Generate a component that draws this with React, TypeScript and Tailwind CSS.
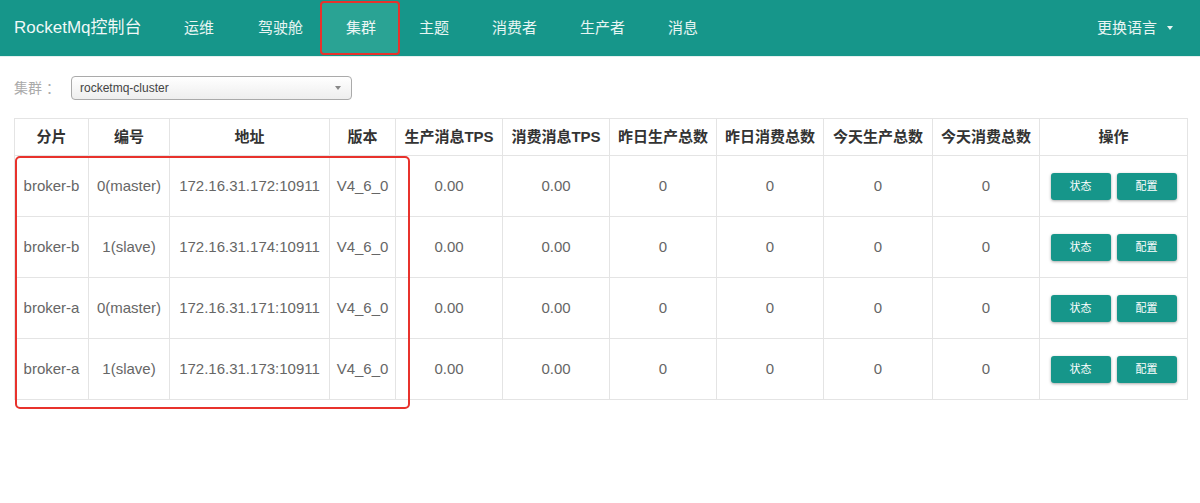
import React from "react";

const font = { fontFamily: '"Liberation Sans", "Noto Sans CJK SC", sans-serif' };

const navItems = [
  { label: "运维", w: "w-[74px] pl-[22px]", active: false },
  { label: "驾驶舱", w: "w-[86px] pl-[22px]", active: false },
  { label: "集群", w: "w-[76px] pl-[24px]", active: true },
  { label: "主题", w: "w-[73px] pl-[21px]", active: false },
  { label: "消费者", w: "w-[88px] pl-[21px]", active: false },
  { label: "生产者", w: "w-[88px] pl-[21px]", active: false },
  { label: "消息", w: "w-[73px] pl-[21px]", active: false },
];

const headers = ["分片", "编号", "地址", "版本", "生产消息TPS", "消费消息TPS", "昨日生产总数", "昨日消费总数", "今天生产总数", "今天消费总数", "操作"];
const widths = [74, 81, 160, 66, 107, 107, 107, 107, 109, 107, 148];

const rows = [
  ["broker-b", "0(master)", "172.16.31.172:10911", "V4_6_0"],
  ["broker-b", "1(slave)", "172.16.31.174:10911", "V4_6_0"],
  ["broker-a", "0(master)", "172.16.31.171:10911", "V4_6_0"],
  ["broker-a", "1(slave)", "172.16.31.173:10911", "V4_6_0"],
];

function Btn({ children }: { children: React.ReactNode }) {
  return (
    <button className="w-[60px] h-[27px] rounded-[3px] bg-[#16968a] text-white text-[11px] shadow-[0_1px_3px_rgba(0,0,0,0.35)]">
      {children}
    </button>
  );
}

const td = "border border-[#e4e4e4] text-[15px] text-[#666] text-center whitespace-nowrap p-0";

export default function App() {
  return (
    <div className="w-[1200px] h-[503px] bg-white overflow-hidden" style={font}>
      <div className="h-[57px] bg-[#16968a] flex items-center border-b border-[#e3f1ef]">
        <div className="pl-[14px] w-[162px] text-[17px] text-white/95">RocketMq控制台</div>
        <div className="flex h-full">
          {navItems.map((it) =>
            it.active ? (
              <div key={it.label} className="relative h-full flex items-center">
                <div className={`h-[50px] ${it.w} bg-[#2aa394] flex items-center text-[15px] text-white/90 whitespace-nowrap`}>
                  {it.label}
                </div>
                <div className="absolute left-[-2px] top-[1px] w-[80px] h-[54px] border-2 border-[#e8322c] rounded-[4px]" />
              </div>
            ) : (
              <div key={it.label} className={`h-full flex items-center ${it.w} text-[15px] text-white/90 whitespace-nowrap`}>
                {it.label}
              </div>
            )
          )}
        </div>
        <div className="ml-auto pr-[27px] flex items-center gap-[10px] text-[15px] text-white/90">
          <span>更换语言</span>
          <span className="w-0 h-0 border-l-[3px] border-r-[3px] border-t-[4px] border-l-transparent border-r-transparent border-t-white/90" />
        </div>
      </div>

      <div className="flex items-center h-[24px] mt-[19px] px-[14px]">
        <span className="text-[14px] text-[#aaaaaa] w-[57px]">
          集群<span className="ml-[4px]">：</span>
        </span>
        <div className="w-[281px] h-[24px] rounded-[4px] border border-[#aaaaaa] bg-gradient-to-b from-white to-[#eeeeee] flex items-center px-[8px] text-[12px] text-[#444]">
          <span>rocketmq-cluster</span>
          <span className="ml-auto mr-[2px] w-0 h-0 border-l-[3px] border-r-[3px] border-t-[4px] border-l-transparent border-r-transparent border-t-[#888]" />
        </div>
      </div>

      <div className="relative mt-[18px] ml-[14px] w-[1173px]">
        <table className="table-fixed border-collapse w-[1173px]">
          <colgroup>
            {widths.map((w, i) => (
              <col key={i} style={{ width: w }} />
            ))}
          </colgroup>
          <thead>
            <tr className="h-[37px]">
              {headers.map((h) => (
                <th key={h} className="border border-[#e4e4e4] text-[15px] font-bold text-[#333] text-center whitespace-nowrap p-0">
                  {h}
                </th>
              ))}
            </tr>
          </thead>
          <tbody>
            {rows.map((r, i) => (
              <tr key={i} className="h-[61px]">
                {r.map((c, j) => (
                  <td key={j} className={td}>
                    {c}
                  </td>
                ))}
                <td className={td}>0.00</td>
                <td className={td}>0.00</td>
                <td className={td}>0</td>
                <td className={td}>0</td>
                <td className={td}>0</td>
                <td className={td}>0</td>
                <td className="border border-[#e4e4e4] text-center">
                  <div className="flex justify-center gap-[6px]">
                    <Btn>状态</Btn>
                    <Btn>配置</Btn>
                  </div>
                </td>
              </tr>
            ))}
          </tbody>
        </table>
        <div className="absolute left-[1px] top-[38px] w-[395px] h-[253px] border-2 border-[#e8322c] rounded-[5px] pointer-events-none" />
      </div>
    </div>
  );
}
